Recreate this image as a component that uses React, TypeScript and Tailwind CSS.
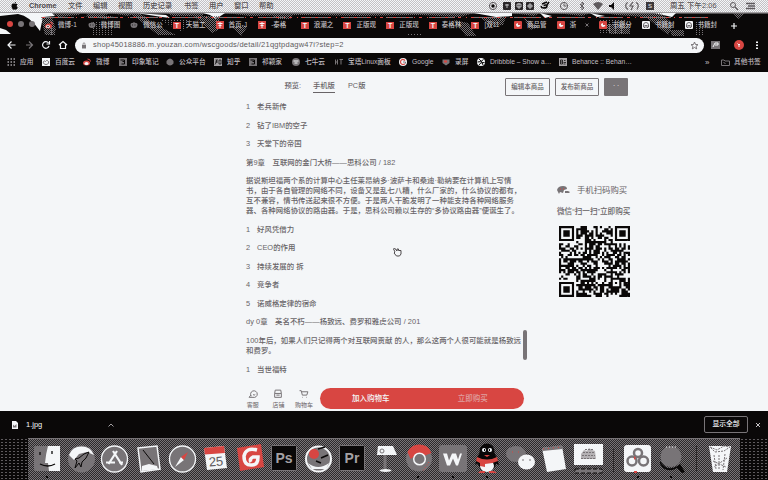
import React from "react";

const INK = "#787477";
const PAPER = "#f4f6f8";
const RED = "#d84642";
const NIGHT = "#0a0808";

/* ---------- menu bar ---------- */

const menus = [
  { t: "Chrome", w: "w-[39px] font-bold text-[#4c484b]" },
  { t: "文件", w: "w-[25px]" },
  { t: "编辑", w: "w-[25px]" },
  { t: "视图", w: "w-[25px]" },
  { t: "历史记录", w: "w-[41px]" },
  { t: "书签", w: "w-[25px]" },
  { t: "用户", w: "w-[25px]" },
  { t: "窗口", w: "w-[25px]" },
  { t: "帮助", w: "w-[25px]" },
];

function MenuBar() {
  return (
    <div className="flex h-3 items-center bg-[#f4f6f8] bg-[repeating-conic-gradient(#c3c1c4_0_25%,#f4f6f8_0_50%)] bg-[length:2px_2px] text-[7.300px] font-medium whitespace-nowrap text-[#565255]">
      <svg className="mr-[11px] ml-[11px] h-[8px] w-[7px] shrink-0" viewBox="0 0 14 16" fill={NIGHT}>
        <path d="M7 4C4 2 1 4 1 8c0 4 3 8 4.500 7.500 1-.4 2-.4 3 0C10.500 16 13 12.500 13.500 11c-3-1.500-2.500-5 0-6C12 3 9 3 7 4zM7 3c0-2 1.500-3 3-3 0 2-1.500 3-3 3z" />
      </svg>
      {menus.map((m) => (
        <span key={m.t} className={`shrink-0 ${m.w}`}>{m.t}</span>
      ))}
      <div className="flex-1" />
      <svg className="h-3 w-[158px] shrink-0" viewBox="494 0 158 12" fill="none" stroke="#5e5a5d">
        <circle cx="499" cy="6" r="3.600" />
        <circle cx="499" cy="6" r="1.700" fill={NIGHT} stroke="none" />
        <g fill="#2a2628" stroke="none">
          <rect x="509" y="2" width="8" height="8" rx="1" />
          <rect x="521" y="2" width="8" height="8" rx="1" />
          <rect x="532" y="2" width="8" height="8" rx="1" />
        </g>
        <path d="M511 5h4M513 4v4M523 4h4v3h-4zM525 3v6M534 5h4v2h-4zM536 3v6" stroke={PAPER} strokeWidth=".7" />
        <path d="M547 6a3 2.500 0 1 0 6-1l2-3M548 4l5-2M550 6a1.500 1.500 0 1 1 0 1" stroke={NIGHT} strokeWidth="1.500" />
        <circle cx="570" cy="6" r="3.600" />
        <path d="M570 3.500V6h2.500M586 4l4 4-2 2V2l2 2-4 4" />
        <path d="M599 4q5-4 10 0l-5 6z" fill="#5e5a5d" stroke="none" />
        <path d="M615 5h2l3-3v8l-3-3h-2z" fill={NIGHT} stroke="none" />
        <path d="M634 2.500q-3 1-2 5l2 2M642 2.500q4 2 1 7M639 2l-3 4h3l-2 4" strokeWidth="1.200" />
      </svg>
      <span className="mr-[18px] flex h-2 w-[8px] items-center justify-center bg-[#3c383b] text-[6px] text-[#f4f6f8]">S</span>
      <span className="w-[50px] shrink-0 tracking-[0.150px] -translate-x-[2px]">周五 下午2:06</span>
      <svg className="h-3 w-[46px] shrink-0" viewBox="722 0 46 12" fill="none" stroke="#5e5a5d">
        <circle cx="733" cy="5" r="2.500" />
        <path d="M735 7l3 3M746 3.500h9M748 6h7M746 8.500h9" strokeWidth="1.300" />
      </svg>
    </div>
  );
}

/* ---------- tab strip ---------- */

type Fav = "weibo" | "paw" | "t" | "f" | "yz" | "head";
const tabs: { f: Fav; t: string; x?: boolean }[] = [
  { f: "weibo", t: "微博-1" },
  { f: "paw", t: "微博图" },
  { f: "paw", t: "微信公" },
  { f: "t", t: "天猫工" },
  { f: "f", t: "首页-J" },
  { f: "f", t: "-泰格" },
  { f: "t", t: "浪潮之" },
  { f: "t", t: "正版现" },
  { f: "t", t: "正版现" },
  { f: "t", t: "泰格林" },
  { f: "t", t: "[双11" },
  { f: "yz", t: "商品管" },
  { f: "yz", t: "浙", x: true },
  { f: "yz", t: "书籍分" },
  { f: "head", t: "书籍封" },
  { f: "head", t: "书籍封" },
];

function Favicon({ f }: { f: Fav }) {
  if (f === "t")
    return <span className="flex h-[7px] w-2 shrink-0 items-center justify-center bg-[#d84642] text-[7px] leading-none font-bold text-[#f4f6f8]">T</span>;
  return (
    <svg className="size-2 shrink-0" viewBox="0 0 16 16">
      {f === "weibo" && (
        <>
          <ellipse cx="7" cy="10" rx="7" ry="5" fill={RED} />
          <ellipse cx="6" cy="11" rx="4" ry="3" fill={PAPER} />
          <circle cx="6" cy="11" r="1.500" fill={NIGHT} />
          <path d="M10 2q5 0 5 5" stroke={RED} strokeWidth="2" fill="none" />
        </>
      )}
      {f === "paw" && (
        <>
          <path d="M1 7q0-4 4-3 3-3 6 0 4-1 4 3 0 7-7 7T1 7z" fill={INK} />
          <path d="M4 8h2M9 8h2" stroke={NIGHT} strokeWidth="1.500" />
        </>
      )}
      {f === "f" && (
        <>
          <rect width="16" height="16" fill={RED} />
          <path d="M3 5h10M8 2v12M5 9h6" stroke={PAPER} strokeWidth="2" />
        </>
      )}
      {f === "yz" && (
        <>
          <rect width="16" height="16" rx="2" fill={RED} />
          <path d="M4 6q0 6 4 6 4 0 5-4H8V4z" fill={PAPER} />
        </>
      )}
      {f === "head" && (
        <>
          <rect width="16" height="16" rx="2" fill={PAPER} />
          <path d="M3 8q0-5 5-5t5 5v4H3zM5 9h6M5 12v2M11 12v2" stroke="#4c484b" strokeWidth="1.600" fill="none" />
        </>
      )}
    </svg>
  );
}

function TabStrip() {
  return (
    <div className="relative flex h-6 overflow-hidden bg-[#0a0808]">
      <svg className="absolute inset-0 h-6 w-[768px]" viewBox="0 12 768 24">
        <defs>
          <pattern id="grain" width="2" height="2" patternUnits="userSpaceOnUse">
            <rect width="1" height="1" fill={INK} />
            <rect x="1" y="1" width="1" height="1" fill={INK} />
          </pattern>
          <pattern id="fine" width="3" height="2" patternUnits="userSpaceOnUse">
            <rect width="1" height="1" fill={INK} />
          </pattern>
        </defs>
        <path d="M0 12h768v1.500H0z" fill="#a09da0" />
        <path d="M0 13h52l3 3-12 1-3 14Q30 16 18 14L0 16zM0 28l6 2 5 4H0z" fill={PAPER} />
        <path d="M203 13h22l-9 6-6-4zM136 13l30 2 4 3-8-1zM474 13h38v3l-16 1zM540 13l12 3-7 2zM590 13l15 3-8 1zM654 13h22l-4 4z" fill={PAPER} />
        <path d="M52 13h30l-4 2-20 2zM86 13h24l-8 4h-14zM110 13h26l-8 3zM166 13h37v3h-30zM226 13h248l-14 4-40-2-60 1-60-1-50 1zM512 13h28l-6 3zM556 13h34l-8 3zM606 13h48l-8 4-30-2z" fill="url(#grain)" />
        <path d="M41 17h11l4 13-3 5h-8l-2-9zM83 16h30l-6 3zM128 13h12l16 12 20 10h-18l-20-16zM194 16h26l-2 14-6 3zM232 26h16l-7 10zM270 14h24l-4 5h-12zM454 20l14 3 8 13h-10zM480 17h26l-3 8-12 1zM524 18l15 9-9 3zM604 24h26v10h-20zM641 13h20l12 12-5 10zM670 30h14v6h-12zM733 13h12l-7 6z" fill="url(#grain)" />
        <path d="M46 28h10v8H46zM92 22h20v14H92zM160 20h30l-8 12zM408 33h14v3h-14zM600 20h26v14h-26zM694 22h10v14h-8z" fill="url(#fine)" />
        <path d="M42 17.500h32M88 17.500h30M130 17.500h28M172 17.500h30M216 17.500h28M258 17.500h27M301 17.500h28M343 17.500h28M386 17.500h27M429 17.500h26M471 17.500h30M514 17.500h27M557 17.500h28M599 17.500h24M641 17.500h30M684 17.500h24" stroke={INK} />
        <path d="M42 17.500h666" stroke={RED} strokeDasharray="3 5 1 4" />
      </svg>
      <div className="relative flex w-[45px] shrink-0 items-center gap-[5px] pl-[7px]">
        <span className="size-[6px] rounded-full bg-[#d84642]" />
        <span className="size-[6px] rounded-full bg-[#787477]" />
        <span className="size-[6px] rounded-full bg-[#787477]" />
      </div>
      {tabs.map((tab, i) => (
        <div key={i} className="relative flex w-[42.650px] shrink-0 items-center gap-[5px] pt-[2px]">
          <Favicon f={tab.f} />
          <span className="text-[6.500px] font-medium whitespace-nowrap text-[#c5c2c5]">{tab.t}</span>
          {tab.x && (
            <svg className="ml-[4px] size-1" viewBox="0 0 8 8" stroke={INK} strokeWidth="2">
              <path d="M1 1l6 6M7 1L1 7" />
            </svg>
          )}
        </div>
      ))}
      <svg className="relative ml-[3px] h-6 w-2 shrink-0" viewBox="0 0 8 24" stroke={PAPER} strokeWidth="1.200">
        <path d="M1 14h6M4 11v6" />
      </svg>
    </div>
  );
}

/* ---------- toolbar ---------- */

function Toolbar() {
  return (
    <div className="flex h-[18px] items-center bg-[#0a0808]">
      <svg className="h-[18px] w-[75px] shrink-0" viewBox="0 36 75 18" fill="none" stroke={PAPER} strokeWidth="1.200">
        <path d="M15.500 45H8.500M11.500 41.500L8 45l3.500 3.500" />
        <path d="M26 45h6M29 41.500l3.500 3.500-3.500 3.500" stroke={INK} />
        <path d="M48.500 43a3.300 3.300 0 1 0 .5 3M49.500 41v3h-3" />
        <path d="M59 45l4-3.500 4 3.500M60.500 44.500v4h5v-4" />
      </svg>
      <div className="flex h-[15px] w-[629px] shrink-0 items-center rounded-full bg-[#f4f6f8] pr-[5px] pl-[7px]">
        <svg className="mr-[7px] h-[7px] w-1 shrink-0" viewBox="0 0 8 14" fill={INK}>
          <rect y="6" width="8" height="7" />
          <path d="M2 7V3q2-3 4 0v4" fill="none" stroke={INK} strokeWidth="1.500" />
        </svg>
        <span className="flex-1 text-[7.500px] tracking-[0.240px] whitespace-nowrap text-[#5e5a5d]">shop45018886.m.youzan.com/wscgoods/detail/21qgtpdagw47i?step=2</span>
        <svg className="size-[9px]" viewBox="0 0 18 18" fill="none" stroke={INK} strokeWidth="2">
          <path d="M9 2l2 5 5 .3-4 3.500 1.400 5L9 13l-4.400 2.800 1.400-5-4-3.500L7 7z" />
        </svg>
      </div>
      <svg className="h-[18px] w-[64px] shrink-0" viewBox="704 36 64 18">
        <rect x="711" y="41" width="9" height="8" fill={INK} />
        <path d="M713 47l2-4h3v2h-3" stroke={PAPER} fill="none" />
        <circle cx="739" cy="45" r="5" fill={RED} />
        <path d="M737.500 43.500l1.500 1.500v2M739 45l1-1" stroke={PAPER} fill="none" />
        <path d="M756 41.500h2v1.600h-2zM756 44.500h2v1.600h-2zM756 47.500h2v1.600h-2z" fill={PAPER} />
      </svg>
    </div>
  );
}

/* ---------- bookmarks ---------- */

const marks = [
  { k: "apps", t: "应用", w: "w-[35px]" },
  { k: "baidu", t: "百度云", w: "w-[41px]" },
  { k: "weibo", t: "微博", w: "w-[36px]" },
  { k: "box", t: "印象笔记", w: "w-[47px]" },
  { k: "paw", t: "公众平台", w: "w-[48px]" },
  { k: "zhi", t: "知乎", w: "w-[35px]" },
  { k: "box", t: "祁颖家", w: "w-[43px]" },
  { k: "cow", t: "七牛云", w: "w-[43px]" },
  { k: "bt", t: "宝塔Linux面板", w: "w-[64px]" },
  { k: "google", t: "Google", w: "w-[43px]" },
  { k: "heart", t: "录屏", w: "w-[35px]" },
  { k: "ball", t: "Dribbble – Show a…", w: "w-[82px]" },
  { k: "be", t: "Behance :: Behan…", w: "w-[140px]" },
];

function MarkIcon({ k }: { k: string }) {
  return (
    <svg className="size-2 shrink-0" viewBox="0 0 16 16" fill="none">
      {k === "apps" && <path d="M1 2h3M7 2h3M13 2h3M1 8h3M7 8h3M13 8h3M1 14h3M7 14h3M13 14h3" stroke="#a39fa2" strokeWidth="3" />}
      {k === "baidu" && (<><rect width="16" height="16" fill={PAPER} /><path d="M3 10a2 2 0 0 1 4-3 3 3 0 0 1 6 3q-1 3-5 3T3 10z" stroke={INK} strokeWidth="2" /></>)}
      {k === "weibo" && (<><ellipse cx="7" cy="10" rx="7" ry="5" fill={RED} /><ellipse cx="7" cy="11" rx="4" ry="3" fill={PAPER} /><path d="M9 2q6 0 6 5" stroke={RED} strokeWidth="2" /></>)}
      {k === "box" && (<><rect width="16" height="16" fill={INK} /><path d="M3 4h8v8H5M7 7h5" stroke={NIGHT} strokeWidth="2" /></>)}
      {k === "paw" && <path d="M1 6q3-5 7-5t7 5v5q-3 4-7 4t-7-4z" fill={INK} />}
      {k === "zhi" && (<><rect width="16" height="16" fill="#a39fa2" /><path d="M3 4h5M2 8h6M5 4v4l-3 5M10 4h4v8h-4z" stroke={NIGHT} strokeWidth="1.500" /></>)}
      {k === "cow" && (<><circle cx="8" cy="8" r="8" fill={INK} /><path d="M3 6h10M5 10h6" stroke={PAPER} strokeWidth="2" /></>)}
      {k === "bt" && <path d="M1 3v10M5 3v10M1 8h4M9 3h7M12 3v10" stroke={INK} strokeWidth="2" />}
      {k === "google" && (<><circle cx="8" cy="8" r="8" fill={PAPER} /><path d="M12 5a5 5 0 1 0 0 6" stroke={RED} strokeWidth="2.500" /><path d="M8 8h5v3" stroke={INK} strokeWidth="2" /></>)}
      {k === "heart" && (<><path d="M1 3h14v7l-7 5-7-5z" fill={INK} /><path d="M4 5h6v4H4z" fill={RED} /></>)}
      {k === "ball" && (<><circle cx="8" cy="8" r="8" fill={PAPER} /><path d="M4 2q7 5 8 12M1 8q7 1 12-5M4 14q2-6 11-5" stroke={NIGHT} strokeWidth="2" /></>)}
      {k === "be" && (<><rect width="16" height="16" fill="#a39fa2" /><path d="M3 4v8h4V4zM3 8h4M10 5h3M9 9h5M9 12h4" stroke={NIGHT} strokeWidth="1.500" /></>)}
    </svg>
  );
}

function Bookmarks() {
  return (
    <div className="flex h-[18px] items-center bg-[#0a0808] pb-px pl-[7px] text-[6.700px] font-medium whitespace-nowrap text-[#c2bfc2]">
      {marks.map((m, i) => (
        <div key={i} className={`flex shrink-0 items-center gap-[5px] ${m.w}`}>
          <MarkIcon k={m.k} />
          <span>{m.t}</span>
        </div>
      ))}
      <span className="ml-[6px] w-[16px] text-[8px]">»</span>
      <svg className="mr-[4px] h-[7px] w-[9px]" viewBox="0 0 18 14" fill="none" stroke={INK} strokeWidth="2">
        <path d="M1 2h5l2 2h9v9H1zM5 7l4 2" />
      </svg>
      <span>其他书签</span>
    </div>
  );
}

/* ---------- goods page ---------- */

const paragraphs: string[][] = [
  ["1", "老兵新传"],
  ["2", "钻了IBM的空子"],
  ["3", "天堂下的帝国"],
  ["第9章　互联网的金门大桥——思科公司 / 182"],
  ["据说斯坦福两个系的计算中心主任莱昂纳多·波萨卡和桑迪·勒纳要在计算机上写情\n书，由于各自管理的网络不同，设备又是乱七八糟，什么厂家的，什么协议的都有，\n互不兼容，情书传送起来很不方便。于是两人干脆发明了一种能支持各种网络服务\n器、各种网络协议的路由器。于是，思科公司赖以生存的“多协议路由器”便诞生了。"],
  ["1", "好风凭借力"],
  ["2", "CEO的作用"],
  ["3", "持续发展的 拆"],
  ["4", "竞争者"],
  ["5", "诺威格定律的宿命"],
  ["dy 0章　英名不朽——杨致远、费罗和雅虎公司 / 201"],
  ["100年后，如果人们只记得两个对互联网贡献 的人，那么这两个人很可能就是杨致远\n和费罗。"],
  ["1", "当世福特"],
];

const QR_SIZE = 33;

function inFinder(x: number, y: number) {
  const corners = [[0, 0], [QR_SIZE - 7, 0], [0, QR_SIZE - 7]];
  for (const [cx, cy] of corners) {
    const dx = x - cx;
    const dy = y - cy;
    if (dx >= -1 && dx <= 7 && dy >= -1 && dy <= 7) {
      const d = Math.max(Math.abs(dx - 3), Math.abs(dy - 3));
      return d === 3 || d <= 1;
    }
  }
  const a = Math.max(Math.abs(x - 26), Math.abs(y - 26));
  if (a <= 2) return a !== 1;
  return null;
}

function QrCode() {
  const cells: string[] = [];
  let seed = 4517;
  for (let y = 0; y < QR_SIZE; y++) {
    for (let x = 0; x < QR_SIZE; x++) {
      seed = (seed * 1103515245 + 12345) % 2147483648;
      const fixed = inFinder(x, y);
      const dark = fixed === null ? (seed >> 12) % 100 < 56 : fixed;
      if (dark) cells.push(`M${x} ${y}h1v1h-1z`);
    }
  }
  return (
    <svg className="size-[71px]" viewBox="0 0 33 33">
      <path d={cells.join("")} fill={NIGHT} />
    </svg>
  );
}

function GoodsPage() {
  return (
    <div className="relative flex h-[339px] bg-[#f4f6f8] text-[#686467]">
      <div className="ml-[246px] flex w-[282px] shrink-0 flex-col pt-[8px]">
        <div className="flex h-[14px] pl-[38.500px] text-[7.300px] leading-[11px] font-medium">
          <span className="w-[28.500px]">预览:</span>
          <span className="mr-[13px] h-[13px] w-[22px] border-b border-[#686467] whitespace-nowrap">手机版</span>
          <span>PC版</span>
        </div>
        <div className="flex flex-col gap-[8.550px] pt-[8px] text-[7.400px] leading-[10px] font-medium tracking-[0.050px]">
          {paragraphs.map((p, i) => (
            <div key={i} className="flex">
              {p.length === 2 && <span className="w-[11px]">{p[0]}</span>}
              <span className="whitespace-pre">{p[p.length - 1]}</span>
            </div>
          ))}
        </div>
        <div className="mt-auto flex items-center pb-[2px]">
          {[
            { t: "客服", d: "M6 13a6 6 0 1 1 3 2H2l3-4M9 10q2 2 4 0" },
            { t: "店铺", d: "M4 2h10l1 6v7H3V8zM3 8h12M6 11h6" },
            { t: "购物车", d: "M1 3h3l2 8h8l2-6H5M6 15h1M13 15h1" },
          ].map((n) => (
            <div key={n.t} className="flex w-[25.600px] shrink-0 -translate-x-[6px] flex-col items-center gap-[2px] text-[6px] leading-[8px] whitespace-nowrap">
              <svg className="size-[10px]" viewBox="0 0 18 18" fill="none" stroke={INK} strokeWidth="1.800"><path d={n.d} /></svg>
              {n.t}
            </div>
          ))}
          <div className="-ml-[3px] flex h-[21px] w-[204px] shrink-0 items-center rounded-full bg-[#d84642] text-[7.500px] font-medium text-[#f4f6f8]">
            <span className="w-1/2 text-center">加入购物车</span>
            <span className="w-1/2 text-center text-[#dfa0a0]">立即购买</span>
          </div>
        </div>
      </div>
      <div className="-ml-[23px] flex w-[130px] shrink-0 flex-col">
        <div className="mt-[6px] flex h-[18px] text-[6.500px] leading-[16px] font-medium whitespace-nowrap">
          <span className="mr-[5px] h-[18px] w-[45px] rounded-[1px] border border-[#787477] text-center">编辑本商品</span>
          <span className="mr-[5px] h-[18px] w-[44px] rounded-[1px] border border-[#787477] text-center">发布新商品</span>
          <span className="h-[18px] w-[24px] rounded-[1px] bg-[#787477] text-center text-[#f4f6f8]">· ·</span>
        </div>
        <div className="mt-[86px] ml-[52px] flex h-[16px] items-center whitespace-nowrap">
          <svg className="mr-[6px] h-[10px] w-[14px] shrink-0" viewBox="0 0 14 10" fill={INK}>
            <path d="M0 5q1-4 6-4 4 0 4 3l-3 1-1 3-3-1-1 2-1-2z" />
            <path d="M3 4h1M6 4h1" stroke={RED} />
            <path d="M8 6h3l2 1-1 1H8z" />
          </svg>
          <span className="text-[8.400px] leading-[12px]">手机扫码购买</span>
        </div>
        <span className="mt-[8px] ml-[52px] text-[7.600px] leading-[12px] font-medium whitespace-nowrap">微信“扫一扫”立即购买</span>
        <div className="mt-[8px] ml-[54px]">
          <QrCode />
        </div>
      </div>
      <span className="absolute top-[258px] left-[523px] h-[30px] w-1 rounded-full bg-[#787477]" />
      <svg className="absolute top-[175px] left-[393px] h-[10px] w-[9px]" viewBox="0 0 18 20" fill={PAPER} stroke="#4c484b" strokeWidth="2">
        <path d="M4 10L1 4l2-2 5 6V4h3v3h5v7l-3 4H7l-5-6z" />
      </svg>
    </div>
  );
}

/* ---------- download shelf ---------- */

function Shelf() {
  return (
    <div className="flex h-[27px] items-center bg-[#0a0808] text-[#f4f6f8]">
      <svg className="ml-3 h-[8px] w-[6px]" viewBox="0 0 12 16">
        <path d="M0 0h8l4 4v12H0z" fill={PAPER} />
        <path d="M2 7l3 3 4-4v7H2z" fill={INK} />
      </svg>
      <span className="ml-[8px] w-[82px] text-[7.500px]">1.jpg</span>
      <svg className="h-[4px] w-[6px]" viewBox="0 0 12 8" fill="none" stroke="#a39fa2" strokeWidth="2"><path d="M1 7l5-5 5 5" /></svg>
      <div className="flex-1" />
      <span className="flex h-[17px] w-[44px] items-center justify-center rounded-[2px] border border-[#787477] text-[6.800px] font-medium">显示全部</span>
      <svg className="mr-[7px] ml-[7px] size-[6px]" viewBox="0 0 12 12" stroke="#c5c2c5" strokeWidth="2"><path d="M2 2l8 8M10 2l-8 8" /></svg>
    </div>
  );
}

/* ---------- dock ---------- */

function Dock() {
  return (
    <div className="flex h-[42px] flex-col bg-[#0a0808] bg-[radial-gradient(#5e5a5d_0.6px,transparent_0.7px)] bg-[length:4px_3px]">
      <div className="ml-[28px] flex h-[42px] w-[712px] border-t border-[#787477] bg-[repeating-conic-gradient(#787477_0_25%,#2c292b_0_50%)] bg-[length:2px_2px]">
        <svg className="-mt-px h-[42px] w-[712px]" viewBox="28 438 712 42" fontFamily="Liberation Sans, sans-serif" textAnchor="middle">
          {/* Finder */}
          <rect x="34" y="446" width="26" height="25" rx="2" fill={INK} />
          <path d="M48 446h12v25H49l-1-8h-3q1-10 3-17z" fill={PAPER} />
          <path d="M40 452v3M52 451v3M40 464q8 4 15 0" stroke={NIGHT} strokeWidth="1.300" fill="none" />
          {/* Launchpad */}
          <circle cx="81.500" cy="459" r="13.500" fill={INK} />
          <path d="M69 455a13.500 13.500 0 0 1 25 0l-7-3-8 2-5 6z" fill={PAPER} />
          <path d="M75 459l4-1 5-4 5-2-3 6-4 4-1 5-2-4-4 5 2-7z" fill={INK} stroke={NIGHT} />
          {/* App Store */}
          <circle cx="114.500" cy="459" r="13" fill={INK} stroke={PAPER} strokeWidth="1.300" />
          <path d="M113 451l9 14M117 451l-8.500 13M106 462.500h9M119 462.500h4" stroke={PAPER} strokeWidth="2.200" />
          {/* Mail stamp */}
          <path d="M138 448l19-2 3 23-19 3z" fill={INK} stroke={PAPER} strokeWidth="1.500" />
          <path d="M142 466l7-2 8 2 1 3-16 2z" fill={PAPER} />
          <path d="M143 450l11 14" stroke={NIGHT} />
          {/* Safari */}
          <circle cx="182.500" cy="459" r="13" fill={INK} stroke={PAPER} strokeWidth="1.300" />
          <path d="M175 467l6-10 3 3z" fill={PAPER} />
          <path d="M181 457l7-5-4 8z" fill={RED} />
          {/* Calendar */}
          <path d="M204 448l20-2 3 22-20 2z" fill={PAPER} />
          <path d="M204 448l20-2 .9 7-20 1.500z" fill={RED} />
          <text x="216" y="466" fontSize="13" fill="#5e5a5d" transform="rotate(-5 216 462)">25</text>
          {/* Netease G */}
          <path d="M237 448l24-4 3 23-24 4z" fill={RED} />
          <path d="M257 450q-11-3-13 6 0 10 8 9 6 0 6-8h-5q-4 2-2 5" stroke={PAPER} strokeWidth="3.500" fill="none" />
          {/* Photoshop */}
          <rect x="271.500" y="445.500" width="25" height="25" rx="1" fill={NIGHT} stroke={INK} />
          <text x="284" y="463" fontSize="14" fontWeight="bold" fill="#a5a1a4">Ps</text>
          {/* Disk with clock face */}
          <circle cx="318.500" cy="459" r="12.500" fill={INK} stroke={PAPER} strokeWidth="2" />
          <path d="M308 463q10 8 21 0l-3 6h-14z" fill={PAPER} />
          <circle cx="314" cy="454" r="5" fill={RED} />
          <path d="M318 449l7-2M321 458l7-3M316 461l5 2" stroke={NIGHT} strokeWidth="1.500" />
          {/* Premiere */}
          <rect x="339.500" y="445.500" width="25" height="25" rx="1" fill={NIGHT} stroke={INK} />
          <text x="352" y="463" fontSize="14" fontWeight="bold" fill="#a5a1a4">Pr</text>
          {/* Keynote */}
          <path d="M378 446h15l4 9h-20z" fill={PAPER} />
          <circle cx="382" cy="451" r="2" fill="none" stroke={INK} />
          <path d="M385 455v16" stroke={INK} strokeWidth="3" />
          <ellipse cx="385.500" cy="470.500" rx="6" ry="1.500" fill={PAPER} />
          {/* Chrome */}
          <circle cx="419" cy="458.500" r="13" fill={INK} />
          <path d="M407.500 452a13 13 0 0 1 24 1l-8 3q-6-5-10 1l-3 2z" fill={RED} />
          <circle cx="419.500" cy="459" r="5.800" fill={INK} stroke={PAPER} strokeWidth="1.500" />
          <path d="M429 462l-6 9" stroke={RED} strokeDasharray="1 2" />
          {/* WPS */}
          <rect x="439" y="445" width="28" height="27" rx="3" fill={INK} />
          <path d="M443 453.500h4l2 7 3-7h4l2 6 2-6h2l-4 12h-2l-3-7-3 7h-3z" fill={PAPER} />
          {/* QQ */}
          <ellipse cx="487" cy="460" rx="9.500" ry="12" fill={NIGHT} />
          <path d="M478 455l-3 10 4-2zM496 455l3 10-4-2z" fill={NIGHT} />
          <circle cx="487" cy="451" r="7.500" fill={NIGHT} />
          <ellipse cx="487" cy="466" rx="7" ry="6" fill={PAPER} />
          <path d="M477 457q10 5 20 0l1 4q-6 3-13 3v3l-5-1v-3l-4-2zM478 473h7v-2h-5zM489 473h8l-3-2h-5zM484 455h6l-3 2z" fill={RED} />
          <circle cx="484" cy="450" r="2" fill={PAPER} />
          <circle cx="490" cy="450" r="2" fill={PAPER} />
          <path d="M484.500 449v2M489.500 449v2" stroke={NIGHT} />
          {/* WeChat */}
          <ellipse cx="516" cy="454" rx="10" ry="8" fill={INK} />
          <path d="M512 452h1M518 452h1" stroke={RED} />
          <ellipse cx="526.500" cy="462" rx="8.500" ry="7.500" fill={PAPER} />
          <path d="M522 460h2M529 460h2" stroke={INK} />
          {/* Pages */}
          <path d="M542 448l20-2 4 23-19 3z" fill={PAPER} />
          <path d="M542 448l20-3 .5 4-20 2z" fill={INK} />
          <path d="M543 449l19-2" stroke={RED} strokeDasharray="1 4" />
          {/* Screen preview */}
          <rect x="574" y="444" width="29" height="21" fill={PAPER} />
          <path d="M581 459v-5l3-4 3 1 2-3 3 2 3 1 1 8z" fill="#b5b2b5" />
          <path d="M581 458.500h15M582 455.500h13M583 452.500h11M585 449.500h8" stroke={INK} strokeDasharray="2 1" />
          <path d="M575 469h27v4h-27z" fill={INK} stroke={NIGHT} strokeDasharray="4 2" />
          <path d="M613.500 449v23M696.500 445v27" stroke="#2c292b" />
          {/* Cloud drive */}
          <rect x="624" y="445" width="27" height="27" rx="3" fill={PAPER} />
          <g fill="none" stroke={INK} strokeWidth="2.500">
            <circle cx="638" cy="453" r="4" />
            <circle cx="632" cy="461" r="4.500" />
            <circle cx="643.500" cy="461" r="4.500" />
          </g>
          <path d="M634 456l2 2-2 2zM634 471h3v2h-3z" fill={RED} />
          {/* Magnifier */}
          <path d="M660 461q8 13 20 3l5 8-3 1-5-5q-11 6-17-4z" fill={NIGHT} />
          <circle cx="671" cy="456.500" r="10.500" fill={INK} />
          <path d="M666 447h10" stroke={PAPER} strokeDasharray="1 2" />
          {/* Trash */}
          <path d="M709 446h22l-4 26h-14z" fill={PAPER} />
          <path d="M710 447l7 3 7-4 6 1-6 4-9 1zM714 455l2 14M719 455v15M725 454l-2 16M713 461l13 6M727 458l-13 9" fill="none" stroke={INK} strokeDasharray="2 1" />
          <path d="M46 477h2M417 477h2M452 477h2M486 477h2M637 477h2M670 477h2" stroke={NIGHT} strokeWidth="2" />
        </svg>
      </div>
    </div>
  );
}

export default function App() {
  return (
    <div className="flex h-[480px] w-[768px] flex-col overflow-hidden bg-[#0a0808] font-['Liberation_Sans','Noto_Sans_CJK_SC',sans-serif]">
      <MenuBar />
      <TabStrip />
      <Toolbar />
      <Bookmarks />
      <GoodsPage />
      <Shelf />
      <Dock />
    </div>
  );
}
